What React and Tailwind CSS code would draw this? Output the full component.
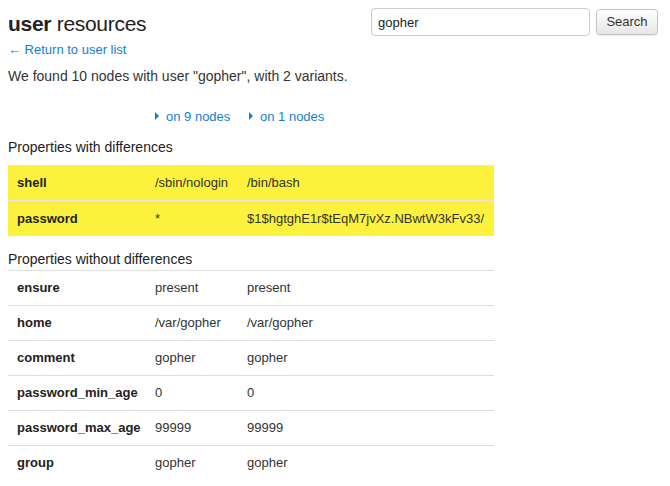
import React from 'react';

const diffRows = [
  { key: 'shell', a: '/sbin/nologin', b: '/bin/bash' },
  { key: 'password', a: '*', b: '$1$hgtghE1r$tEqM7jvXz.NBwtW3kFv33/' },
];

const sameRows = [
  { key: 'ensure', a: 'present', b: 'present' },
  { key: 'home', a: '/var/gopher', b: '/var/gopher' },
  { key: 'comment', a: 'gopher', b: 'gopher' },
  { key: 'password_min_age', a: '0', b: '0' },
  { key: 'password_max_age', a: '99999', b: '99999' },
  { key: 'group', a: 'gopher', b: 'gopher' },
];

const Caret = () => (
  <svg width="4" height="8" viewBox="0 0 4 8" className="inline-block mr-[7px] mb-[2px]">
    <path d="M0 0 L4 4 L0 8 Z" fill="#0f7fd4" />
  </svg>
);

const PropTable = ({ rows, highlight }) => (
  <table className="w-[486px] table-fixed border-collapse text-[13px]">
    <colgroup>
      <col className="w-[139px]" />
      <col className="w-[92px]" />
      <col />
    </colgroup>
    <tbody>
      {rows.map((row) => (
        <tr
          key={row.key}
          className={`h-[35px] border-t ${highlight ? 'bg-[#fcf23d] border-[#e5e5e5]' : 'border-[#dddddd]'}`}
        >
          <td className="pl-[9px] font-bold text-[#222] whitespace-nowrap">{row.key}</td>
          <td className="pl-[8px] whitespace-nowrap">{row.a}</td>
          <td className="pl-[8px] whitespace-nowrap">{row.b}</td>
        </tr>
      ))}
    </tbody>
  </table>
);

export default function App() {
  return (
    <div className="w-[670px] h-[486px] bg-white text-[#333] px-2 font-['Liberation_Sans',Arial,sans-serif] text-[14px] overflow-hidden">
      <div className="flex justify-between">
        <div>
          <h1 className="text-[21px] leading-[26px] mt-[11px] text-[#222] tracking-[-0.3px]">
            <span className="font-bold">user</span> resources
          </h1>
          <a href="#" className="block mt-[5px] text-[13px] leading-[16px] text-[#0f7fd4]">
            ← Return to user list
          </a>
        </div>
        <div className="flex items-start gap-[6px] pt-[8px] pr-[4px]">
          <input
            defaultValue="gopher"
            className="w-[219px] h-[28px] border border-[#cccccc] rounded-[4px] px-[6px] text-[13px] text-[#222] outline-none"
          />
          <button className="mt-[1px] w-[62px] h-[26px] border border-[#c4c4c4] rounded-[4px] bg-gradient-to-b from-white to-[#e6e6e6] text-[13px] text-[#333] shadow-[0_1px_1px_rgba(0,0,0,0.08)]">
            Search
          </button>
        </div>
      </div>

      <p className="mt-[8px] leading-[20px]">We found 10 nodes with user "gopher", with 2 variants.</p>

      <div className="flex mt-[22px] text-[13px] leading-[18px] text-[#0f7fd4]">
        <div className="w-[147px]" />
        <a href="#" className="w-[94px] flex items-center">
          <Caret />on 9 nodes
        </a>
        <a href="#" className="flex items-center">
          <Caret />on 1 nodes
        </a>
      </div>

      <h3 className="mt-[12px] text-[14px] leading-[18px] text-[#222]">Properties with differences</h3>
      <div className="mt-[9px]">
        <PropTable rows={diffRows} highlight />
      </div>

      <h3 className="mt-[14px] text-[14px] leading-[18px] text-[#222]">Properties without differences</h3>
      <div className="mt-[2px]">
        <PropTable rows={sameRows} />
      </div>
    </div>
  );
}
